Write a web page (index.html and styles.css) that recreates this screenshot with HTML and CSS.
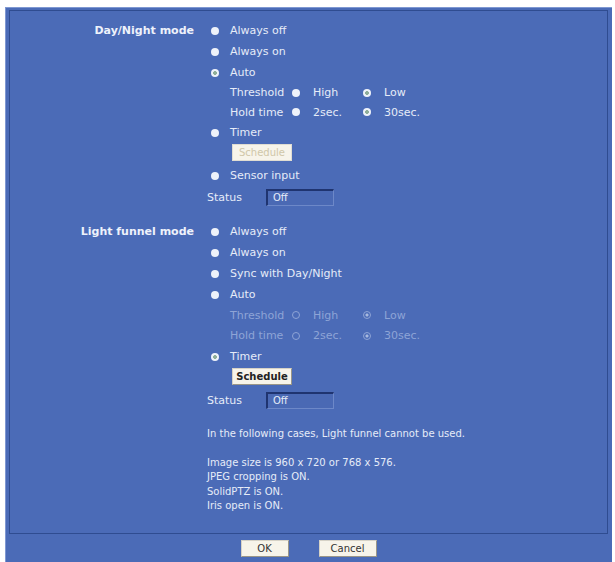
FILE: index.html
```html
<!DOCTYPE html>
<html lang="en">
  <head>
    <meta charset="UTF-8" />
    <title>Day/Night mode</title>
    <link rel="stylesheet" href="styles.css">
  </head>
  <body>
    <div class="frame">
      <div class="panel">
        <div class="mode">
          <div class="mode-label">Day/Night mode</div>
          <div class="options">
            <div class="row"><span class="radio"></span>Always off</div>
            <div class="row"><span class="radio"></span>Always on</div>
            <div class="row"><span class="radio on"></span>Auto</div>
            <div class="row sub">
              <span class="sub-label">Threshold</span>
              <span class="radio"></span><span class="choice">High</span>
              <span class="radio on"></span><span>Low</span>
            </div>
            <div class="row sub">
              <span class="sub-label">Hold time</span>
              <span class="radio"></span><span class="choice">2sec.</span>
              <span class="radio on"></span><span>30sec.</span>
            </div>
            <div class="row"><span class="radio"></span>Timer</div>
            <div class="btn-row"><button class="btn schedule" disabled>Schedule</button></div>
            <div class="row"><span class="radio"></span>Sensor input</div>
            <div class="status"><span class="status-label">Status</span><span class="status-box">Off</span></div>
          </div>
        </div>

        <div class="mode second">
          <div class="mode-label">Light funnel mode</div>
          <div class="options">
            <div class="row"><span class="radio"></span>Always off</div>
            <div class="row"><span class="radio"></span>Always on</div>
            <div class="row"><span class="radio"></span>Sync with Day/Night</div>
            <div class="row"><span class="radio"></span>Auto</div>
            <div class="row sub disabled">
              <span class="sub-label">Threshold</span>
              <span class="radio off"></span><span class="choice">High</span>
              <span class="radio off on"></span><span>Low</span>
            </div>
            <div class="row sub disabled">
              <span class="sub-label">Hold time</span>
              <span class="radio off"></span><span class="choice">2sec.</span>
              <span class="radio off on"></span><span>30sec.</span>
            </div>
            <div class="row"><span class="radio on"></span>Timer</div>
            <div class="btn-row"><button class="btn schedule">Schedule</button></div>
            <div class="status"><span class="status-label">Status</span><span class="status-box">Off</span></div>

            <div class="notes">
              <p>In the following cases, Light funnel cannot be used.</p>
              <ul>
                <li>Image size is 960 x 720 or 768 x 576.</li>
                <li>JPEG cropping is ON.</li>
                <li>SolidPTZ is ON.</li>
                <li>Iris open is ON.</li>
              </ul>
            </div>
          </div>
        </div>
      </div>

      <div class="footer">
        <button class="btn ok">OK</button>
        <button class="btn cancel">Cancel</button>
      </div>
    </div>
  </body>
</html>
```

FILE: styles.css
```css
html {
  box-sizing: border-box;
}

*,
*:before,
*:after {
  box-sizing: inherit;
}

body,
p,
ul {
  margin: 0;
  padding: 0;
}

body {
  background: #fff;
  font-family: "DejaVu Sans", Verdana, sans-serif;
  font-size: 11px;
  color: #e6ecf8;
  height: 562px;
  overflow: hidden;
}

.frame {
  margin: 7px 3px 0 5px;
  height: 555px;
  background: #4b6bb7;
  border-top: 1px solid #7f98d2;
  border-left: 1px solid #7f98d2;
  padding: 2px 4px 0 3px;
}

.panel {
  border: 1px solid #2f4c90;
  height: 524px;
  padding-top: 9px;
}

.mode {
  display: flex;
}

.mode.second {
  margin-top: 13px;
}

.mode-label {
  width: 197px;
  padding-right: 13px;
  text-align: right;
  font-weight: bold;
  line-height: 21px;
  color: #eef2fb;
}

.options {
  display: flex;
  flex-direction: column;
}

.row {
  display: flex;
  align-items: center;
  height: 21px;
}

.radio {
  width: 8px;
  height: 8px;
  margin: 0 11px 0 4px;
  border-radius: 50%;
  background: #eef2fa;
  flex: none;
}

.radio.on {
  background: radial-gradient(circle, #8fae9a 0 1.6px, #eef2fa 2.2px);
}

.radio.off {
  background: none;
  border: 1px solid #8ea4d6;
}

.radio.off.on {
  background: radial-gradient(circle, #a9badf 0 1.3px, transparent 1.8px);
}

.sub {
  height: 19.5px;
  padding-left: 23px;
}

.second .sub {
  height: 20.5px;
}

.sub-label {
  width: 58px;
}

.sub .radio {
  margin: 0 13px 0 4px;
}

.choice {
  width: 46px;
}

.disabled {
  color: #8ea4d6;
}

.btn-row {
  padding: 1px 0 4px 25px;
}

.btn {
  font-family: "DejaVu Sans", Verdana, sans-serif;
  font-size: 10px;
  height: 17px;
  padding: 0;
  background: #f7f4ea;
  border: 1px solid #d6d2c6;
  border-right-color: #9a9688;
  border-bottom-color: #9a9688;
  color: #333;
  cursor: pointer;
}

.schedule {
  width: 60px;
  font-weight: bold;
  color: #222;
}

.schedule:disabled {
  color: #d0c7a8;
  font-weight: normal;
  border-color: #e0ddd2;
}

.status {
  display: flex;
  align-items: center;
  height: 22px;
}

.status-label {
  width: 59px;
}

.status-box {
  width: 68px;
  height: 17px;
  padding-left: 5px;
  line-height: 14px;
  font-size: 10px;
  border-top: 2px solid #1f3470;
  border-left: 2px solid #1f3470;
  border-right: 1px solid #6d88c8;
  border-bottom: 1px solid #6d88c8;
  background: #4a69b4;
}

.notes {
  margin-top: 16px;
  font-size: 10px;
  line-height: 14.5px;
}

.notes ul {
  list-style: none;
  margin-top: 14px;
}

.footer {
  display: flex;
  justify-content: center;
  gap: 30px;
  padding: 6px 0 0 0;
}

.ok {
  width: 48px;
}

.cancel {
  width: 58px;
}
```
